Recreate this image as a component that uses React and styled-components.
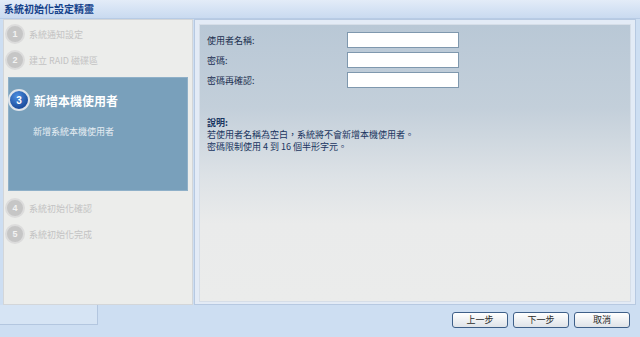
import React from "react";
import styled, { createGlobalStyle } from "styled-components";

const Global = createGlobalStyle`
  html, body { margin: 0; padding: 0; }
  body {
    background: #cfdff2;
    font-family: "Noto Sans CJK TC", "Liberation Sans", sans-serif;
    overflow: hidden;
  }
`;

const Window = styled.div`
  width: 640px;
  height: 337px;
  display: flex;
  flex-direction: column;
  background: #cddef2;
`;

const TitleBar = styled.div`
  height: 18px;
  line-height: 18px;
  padding-left: 4px;
  font-size: 10px;
  font-weight: bold;
  color: #15428b;
  background: linear-gradient(#e3ecf8, #c9daf0);
  border-bottom: 1px solid #b7cbe5;
`;

const Body = styled.div`
  display: flex;
  padding-left: 3px;
  height: 286px;
`;

const LeftPanel = styled.div`
  width: 188px;
  background: #ecedeb;
  border: 1px solid #d3d6d9;
  display: flex;
  flex-direction: column;
  padding-top: 1px;
`;

const StepRow = styled.div`
  height: 26px;
  display: flex;
  align-items: center;
  gap: 4px;
  padding-left: 1px;
  margin-top: ${(p) => p.$mt || 0}px;
`;

const StepCircle = styled.div`
  width: 16px;
  height: 16px;
  border-radius: 50%;
  background: #c6c6c6;
  border: 2px solid #dcdcdc;
  color: #f2f2f2;
  font-size: 9px;
  font-weight: bold;
  display: flex;
  align-items: center;
  justify-content: center;
  font-family: "Liberation Sans", sans-serif;
`;

const StepText = styled.span`
  font-size: 9px;
  color: #c3c3c3;
`;

const ActiveBox = styled.div`
  margin: 4px 0 0 4px;
  width: 180px;
  height: 114px;
  background: #79a0bb;
  border: 1px solid #8fb0c8;
  box-sizing: border-box;
  padding-top: 11px;
  display: flex;
  flex-direction: column;
`;

const ActiveHead = styled.div`
  display: flex;
  align-items: center;
  gap: 4px;
`;

const ActiveCircle = styled.div`
  width: 18px;
  height: 18px;
  border-radius: 50%;
  background: radial-gradient(circle at 40% 30%, #4d8ee0, #1d4fa0 70%);
  border: 2px solid #dfe4ea;
  color: #fff;
  font-size: 10px;
  font-weight: bold;
  display: flex;
  align-items: center;
  justify-content: center;
  font-family: "Liberation Sans", sans-serif;
  margin-left: -1px;
`;

const ActiveTitle = styled.span`
  font-size: 12px;
  font-weight: bold;
  color: #ffffff;
`;

const ActiveSub = styled.div`
  margin: 14px 0 0 24px;
  font-size: 9px;
  color: #e6edf2;
`;

const RightOuter = styled.div`
  width: 442px;
  margin-left: 1px;
  border: 1px solid #b7c9e1;
  background: #e3ebf6;
  padding: 4px 4px 2px 4px;
  box-sizing: border-box;
  display: flex;
`;

const RightInner = styled.div`
  flex: 1;
  border: 1px solid #d6dee8;
  background: linear-gradient(#b9c8d6 0%, #c3cfda 30%, #dde2e6 55%, #eaebeb 72%, #ebeceb 100%);
  padding: 7px 0 0 7px;
  color: #1d3050;
`;

const Form = styled.div`
  display: grid;
  grid-template-columns: 140px 112px;
  grid-auto-rows: 16px;
  row-gap: 4px;
  align-items: center;
`;

const Label = styled.span`
  font-size: 9px;
`;

const Input = styled.input`
  box-sizing: border-box;
  width: 112px;
  height: 16px;
  margin: 0;
  border: 1px solid #7f98ae;
  background: #ffffff;
  outline: none;
`;

const Help = styled.div`
  margin-top: 29px;
  font-size: 9px;
  line-height: 12px;
  color: #1a3560;
`;

const HelpTitle = styled.div`
  font-weight: bold;
`;

const Footer = styled.div`
  flex: 1;
  display: flex;
  align-items: flex-start;
`;

const BehindPanel = styled.div`
  width: 97px;
  height: 19px;
  background: #d6e4f4;
  border-right: 1px solid #b3c6df;
  border-bottom: 1px solid #b3c6df;
`;

const ButtonBar = styled.div`
  margin-left: auto;
  margin-top: 7px;
  margin-right: 10px;
  display: flex;
  gap: 5px;
`;

const Button = styled.button`
  width: 56px;
  height: 16px;
  padding: 0;
  border: 1px solid #3e5f88;
  border-radius: 3px;
  background: linear-gradient(#ffffff, #dfe3e8);
  font-family: "Noto Sans CJK TC", sans-serif;
  font-size: 9px;
  line-height: 14px;
  color: #2a2a2a;
`;

const steps = [
  { n: 1, t: "系統通知設定" },
  { n: 2, t: "建立 RAID 磁碟區" },
];
const stepsAfter = [
  { n: 4, t: "系統初始化確認" },
  { n: 5, t: "系統初始化完成" },
];

export default function App() {
  return (
    <>
      <Global />
      <Window>
        <TitleBar>系統初始化設定精靈</TitleBar>
        <Body>
          <LeftPanel>
            {steps.map((s) => (
              <StepRow key={s.n}>
                <StepCircle>{s.n}</StepCircle>
                <StepText>{s.t}</StepText>
              </StepRow>
            ))}
            <ActiveBox>
              <ActiveHead>
                <ActiveCircle>3</ActiveCircle>
                <ActiveTitle>新增本機使用者</ActiveTitle>
              </ActiveHead>
              <ActiveSub>新增系統本機使用者</ActiveSub>
            </ActiveBox>
            {stepsAfter.map((s, i) => (
              <StepRow key={s.n} $mt={i === 0 ? 4 : 0}>
                <StepCircle>{s.n}</StepCircle>
                <StepText>{s.t}</StepText>
              </StepRow>
            ))}
          </LeftPanel>
          <RightOuter>
            <RightInner>
              <Form>
                <Label>使用者名稱:</Label>
                <Input />
                <Label>密碼:</Label>
                <Input type="password" />
                <Label>密碼再確認:</Label>
                <Input type="password" />
              </Form>
              <Help>
                <HelpTitle>說明:</HelpTitle>
                <div>若使用者名稱為空白，系統將不會新增本機使用者。</div>
                <div>密碼限制使用 4 到 16 個半形字元。</div>
              </Help>
            </RightInner>
          </RightOuter>
        </Body>
        <Footer>
          <BehindPanel />
          <ButtonBar>
            <Button>上一步</Button>
            <Button>下一步</Button>
            <Button>取消</Button>
          </ButtonBar>
        </Footer>
      </Window>
    </>
  );
}
